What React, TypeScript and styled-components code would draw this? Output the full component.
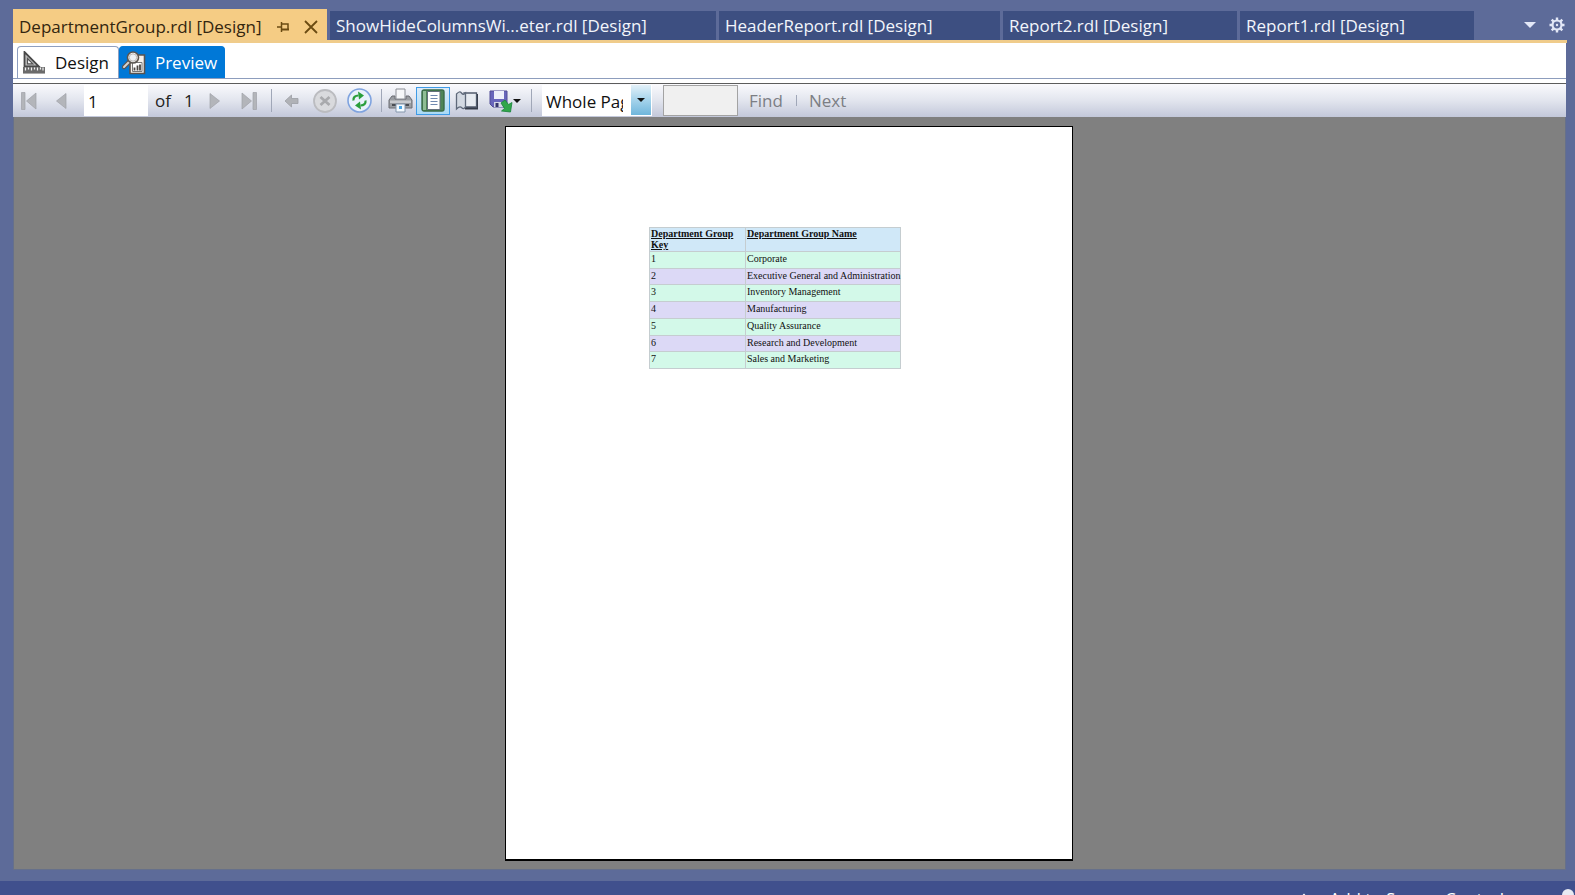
import React from "react";
import styled, { createGlobalStyle, css } from "styled-components";

const GlobalStyle = createGlobalStyle`
  * { box-sizing: border-box; }
  body { margin: 0; background: #5d6b99; }
  body, button, input, select { font-family: "Open Sans", "Noto Sans", sans-serif; font-size: 17px; line-height: 24px; }
  svg { display: block; flex: none; }
`;

const Shell = styled.div`
  display: flex;
  flex-direction: column;
  height: 100vh;
  overflow: hidden;
`;

const TabStrip = styled.div`
  display: flex;
  align-items: flex-end;
  gap: 3px;
  height: 43px;
  margin: 0 8px 0 13px;
  border-bottom: 3px solid #f0cc8b;
`;

const ActiveTab = styled.div`
  display: flex;
  align-items: center;
  gap: 4px;
  width: 314px;
  height: 31px;
  padding: 5px 4px 0 6px;
  background: #f5cc84;
  color: #33260f;
`;

const TabTitle = styled.span`
  flex: 1;
  white-space: nowrap;
`;

const GlyphButton = styled.button`
  display: flex;
  align-items: center;
  justify-content: center;
  padding: 0;
  border: 0;
  width: 24px;
  height: 24px;
  background: none;
`;

const FileTab = styled.button<{ $width: number }>`
  width: ${(p) => p.$width}px;
  height: 29px;
  padding: 1px 6px 0;
  border: 0;
  background: #3d4f81;
  color: #f2f5fb;
  text-align: left;
  white-space: nowrap;
`;

const StripActions = styled.div`
  display: flex;
  align-items: center;
  gap: 3px;
  height: 30px;
  margin: 0 -2px 0 auto;
`;

const Workspace = styled.main`
  display: flex;
  flex-direction: column;
  flex: 1;
  min-height: 0;
  margin: 0 9px 11px 13px;
  background: #fff;
`;

const ModeBar = styled.div`
  display: flex;
  align-items: flex-end;
  height: 36px;
  padding-left: 4px;
  border-bottom: 1px solid #8d9dbd;
`;

const ModeTab = styled.button<{ $selected?: boolean }>`
  display: flex;
  align-items: center;
  height: 32px;
  padding: 0 9px 0 4px;
  gap: 9px;
  border: 1px solid #8e9fc0;
  border-bottom: 0;
  border-radius: 4px 4px 0 0;
  background: #fff;
  color: #111;
  ${(p) =>
    p.$selected &&
    css`
      padding: 0 7px 0 2px;
      border-color: #0078d7;
      background: #0078d7;
      color: #fff;
    `}
`;

const Toolbar = styled.div`
  display: flex;
  align-items: center;
  height: 34px;
  margin-top: 4px;
  padding-left: 1px;
  border-top: 1px solid #5c5c5c;
  background: linear-gradient(#fafafd, #e2e5ee 50%, #c3c8da);
`;

const ToolButton = styled.button<{ $width?: number; $pressed?: boolean }>`
  display: flex;
  align-items: center;
  justify-content: center;
  width: ${(p) => p.$width ?? 34}px;
  height: 28px;
  padding: 0;
  border: 1px solid ${(p) => (p.$pressed ? "#3f9be6" : "transparent")};
  background: ${(p) => (p.$pressed ? "linear-gradient(#dcebf8, #a9daf6)" : "none")};
`;

const Separator = styled.span<{ $short?: boolean }>`
  width: 1px;
  height: ${(p) => (p.$short ? 11 : 23)}px;
  margin: ${(p) => (p.$short ? "0 12px 0 13px" : "0 2px 0 5px")};
  background: #a0a7b8;
`;

const PageInput = styled.input`
  width: 64px;
  height: 31px;
  margin-left: 6px;
  padding: 1px 4px 0;
  border: 0;
  background: #fff;
  color: #111;
`;

const PageCount = styled.span`
  display: flex;
  gap: 13px;
  width: 50px;
  padding-left: 7px;
  color: #222;
`;

const ZoomBox = styled.div`
  position: relative;
  width: 110px;
  height: 31px;
  margin: 0 11px 0 8px;
`;

const ZoomSelect = styled.select`
  appearance: none;
  width: 100%;
  height: 100%;
  padding: 2px 29px 0 4px;
  border: 0;
  border-radius: 0;
  background: #fff;
  color: #111;
`;

const ZoomArrow = styled.span`
  position: absolute;
  top: 0;
  right: 1px;
  bottom: 1px;
  display: flex;
  align-items: center;
  justify-content: center;
  width: 20px;
  background: linear-gradient(#e3f1f9, #a5d3eb 50%, #6fb6dc);
  pointer-events: none;
`;

const FindInput = styled.input`
  width: 75px;
  height: 31px;
  border: 1px solid #a3a3a3;
  background: #f0f0f0;
`;

const FindActions = styled.div`
  display: flex;
  align-items: center;
  margin-left: 11px;
`;

const TextButton = styled.button`
  padding: 0;
  border: 0;
  background: none;
  color: #7c7e84;
`;

const Canvas = styled.section`
  display: flex;
  justify-content: center;
  flex: 1;
  min-height: 0;
  padding: 9px 1px 8px 0;
  border: 1px solid #66708a;
  border-top: 0;
  background: #808080;
`;

const Paper = styled.article`
  width: 568px;
  padding: 100px 0 0 143px;
  border: 1px solid #000;
  border-bottom-width: 2px;
  background: #fff;
`;

const ReportTable = styled.table`
  width: 252px;
  height: 142px;
  border-collapse: collapse;
  table-layout: fixed;
  color: #111;
  font: 10px/11px "Liberation Serif", serif;

  th, td {
    padding: 0 1px;
    border: 1px solid #c5cdd0;
    text-align: left;
    vertical-align: top;
    white-space: nowrap;
  }
  th {
    height: 24px;
    background: #d0e8f8;
    text-decoration: underline;
    white-space: normal;
  }
  th:first-child { width: 96px; }
  td { padding-top: 1px; }
  tbody tr { background: #d3f9e9; }
  tbody tr:nth-child(even) { background: #dcd9f6; }
`;

const StatusBar = styled.footer`
  display: flex;
  align-items: flex-start;
  justify-content: flex-end;
  gap: 58px;
  height: 14px;
  padding-top: 6px;
  overflow: hidden;
  background: #40508d;
  color: #fff;
`;

const SourceControl = styled.button`
  display: flex;
  align-items: center;
  gap: 20px;
  padding: 0;
  border: 0;
  background: none;
  color: inherit;
  white-space: nowrap;
`;

const PinIcon = () => (
  <svg width="13" height="12" viewBox="0 0 13 12" fill="none" stroke="#6b4b12" strokeWidth="1.5">
    <path d="M0 6h4.500M4.500 1v10M4.500 3h6.500v6" />
    <path d="M4.500 8.500h7.500" strokeWidth="2" />
  </svg>
);

const CloseIcon = () => (
  <svg width="14" height="14" viewBox="0 0 14 14" stroke="#6b4b12" strokeWidth="1.8">
    <path d="M1 1l12 12M13 1L1 13" />
  </svg>
);

const GearIcon = () => (
  <svg width="16" height="16" viewBox="0 0 16 16" fill="none" stroke="#e3e8f7">
    <circle cx="8" cy="8" r="4.5" strokeWidth="2.2" />
    <circle cx="8" cy="8" r="1.2" fill="#e3e8f7" stroke="none" />
    <path d="M8 .5v3M8 12.500v3M.5 8h3M12.500 8h3M2.700 2.700l2 2M11.300 11.300l2 2M13.300 2.700l-2 2M4.700 11.300l-2 2" strokeWidth="2.400" />
  </svg>
);

const CaretIcon = ({ color = "#111", width = 8 }: { color?: string; width?: number }) => (
  <svg width={width} height={width / 2} viewBox="0 0 8 4" fill={color}>
    <path d="M0 0h8L4 4z" />
  </svg>
);

const DesignIcon = () => (
  <svg width="24" height="24" viewBox="0 0 24 24">
    <path d="M2.500 1v14.500h14.500z" fill="#bdbdbd" stroke="#484848" strokeWidth="1.800" />
    <path d="M5.500 7.500v5.300h5.300z" fill="#fff" stroke="#555" strokeWidth="1.200" />
    <path d="M1 16h22v7H1z" fill="#6b6b6b" />
    <path d="M3.500 16.500v3M6.500 16.500v2M9.500 16.500v3M12.500 16.500v2M15.500 16.500v3M18.500 16.500v2M21 16.500v3" stroke="#f1f1f1" strokeWidth="1.200" />
    <path d="M1 22.500h22" stroke="#aaa" />
  </svg>
);

const PreviewIcon = () => (
  <svg width="24" height="24" viewBox="0 0 24 24">
    <path d="M8 4h14.500v18.500H8z" fill="#f5f1ec" stroke="#59534f" strokeWidth="1.600" />
    <path d="M10.500 11.500h9.500v9h-9.500z" fill="#fff" stroke="#777" />
    <path d="M12.500 19.500v-3M15.500 19.500v-5M18 19.500v-6" stroke="#4b4541" strokeWidth="1.800" />
    <path d="M7 11l-5 5" stroke="#5b5550" strokeWidth="4.500" strokeLinecap="round" />
    <path d="M7 11l-5 5" stroke="#d8d4d0" strokeWidth="2" strokeLinecap="round" />
    <circle cx="11" cy="6.500" r="5.500" fill="#fff" stroke="#5b5550" strokeWidth="1.600" />
    <circle cx="11" cy="6.500" r="3.700" fill="#edf1f4" stroke="#b9b5b1" />
  </svg>
);

const NavIcon = ({ end, forward }: { end?: boolean; forward?: boolean }) => (
  <svg width="16" height="20" viewBox="0 0 16 20" fill="#b3b5ba" stroke="#9fa1a7" strokeWidth=".7">
    <g transform={forward ? "translate(16 0) scale(-1 1)" : undefined}>
      {end && <path d="M.5 1.500H4v17H.5z" />}
      <path d={end ? "M15 2v16L5.500 10z" : "M13 2.500v15L3.500 10z"} />
    </g>
  </svg>
);

const BackIcon = () => (
  <svg width="15" height="14" viewBox="0 0 15 14" fill="#b0b2b7" stroke="#9c9ea4" strokeWidth=".8">
    <path d="M1 7l6.500-6v3.500H14v5H7.500V13z" />
  </svg>
);

const StopIcon = () => (
  <svg width="24" height="24" viewBox="0 0 24 24" fill="none">
    <circle cx="12" cy="12" r="11" fill="#d9dadd" stroke="#bbbcc0" strokeWidth="1.800" />
    <path d="M7.500 8l9 8M16.500 8l-9 8" stroke="#a9aaad" strokeWidth="2.800" />
  </svg>
);

const RefreshIcon = () => (
  <svg width="25" height="25" viewBox="0 0 25 25">
    <circle cx="12.500" cy="12.500" r="11.500" fill="#e9f1fb" stroke="#7fa3df" strokeWidth="1.600" />
    <g fill="none" stroke="#2a9e3c" strokeWidth="2.200">
      <path d="M6.500 12.500C6 9.500 8 7.500 11.500 7.500" />
      <path d="M18.500 12.500c.5 3-1.500 5-5 5" />
    </g>
    <g fill="#2a9e3c">
      <path d="M11 3.500l6 4-5 4z" />
      <path d="M14 21.500l-6-4 5-4z" />
    </g>
  </svg>
);

const PrinterIcon = () => (
  <svg width="25" height="25" viewBox="0 0 25 25">
    <path d="M4 8h3v3h11V8h3l3 4v8H1v-8z" fill="#9a9da2" stroke="#6a6d73" />
    <path d="M8 1h9v10H8z" fill="#f6f7f9" stroke="#8b8e95" />
    <path d="M2 12.500h21v2.500H2z" fill="#c9cbcf" />
    <path d="M4 17h17" stroke="#4a4d53" strokeWidth="2" />
    <path d="M8 16h9v8H8z" fill="#f4faff" stroke="#8496ac" />
    <path d="M11 18h3v3h-3z" fill="#4aa5e4" />
  </svg>
);

const LayoutIcon = () => (
  <svg width="24" height="23" viewBox="0 0 24 23">
    <rect x="1" y="1" width="22" height="21" rx="2" fill="#4d8457" stroke="#3b6b48" strokeWidth="1.400" />
    <path d="M3.500 2v19" stroke="#8fbd95" strokeWidth="3" />
    <path d="M6.500 2.500h12.500v18H6.500z" fill="#fff" stroke="#64707c" />
    <path d="M9.500 6.500h7M9.500 9.500h7M9.500 12.500h7M9.500 15.500h7" stroke="#7089b0" />
  </svg>
);

const SetupIcon = () => (
  <svg width="24" height="22" viewBox="0 0 24 22">
    <path d="M10 4h13v15.500H10z" fill="#343b48" />
    <path d="M9 3h12.500v14H10z" fill="#e6eaf0" stroke="#515b6c" strokeWidth="1.300" />
    <path d="M1.500 4c2-2 3.500-3 5-1s2.500 1.500 4 0v14c-1.500 2-2.500 2-4 .5s-3-.5-5 1.500z" fill="#d3d9e2" stroke="#5f697a" strokeWidth="1.300" />
  </svg>
);

const SaveIcon = () => (
  <svg width="24" height="24" viewBox="0 0 24 24">
    <path d="M1 2h17v16H4l-3-3z" fill="#6866bb" stroke="#504c96" />
    <path d="M5 2h10v8H5z" fill="#edf0fa" />
    <path d="M5 13h9v5H5z" fill="#d4d7e6" />
    <path d="M6.500 14h3v4h-3z" fill="#35356d" />
    <path d="M12 14l4-3 3.500 4.500 3.500-2-1.500 9.500-9-1 3-2.500z" fill="#31a64a" stroke="#17833a" strokeWidth=".8" />
  </svg>
);

const PublishIcon = () => (
  <svg width="10" height="12" viewBox="0 0 10 12" fill="none" stroke="#fff" strokeWidth="2">
    <path d="M5 12V2M1 6l4-4 4 4" />
  </svg>
);

const NoticeIcon = () => (
  <svg width="13" height="13" viewBox="0 0 13 13" fill="#e8eaf2">
    <circle cx="6" cy="6" r="6" />
  </svg>
);

const NoticeButton = styled.button`
  margin-top: 2px;
  padding: 0;
  border: 0;
  background: none;
`;

const FILE_TABS = [
  { title: "ShowHideColumnsWi...eter.rdl [Design]", width: 386 },
  { title: "HeaderReport.rdl [Design]", width: 281 },
  { title: "Report2.rdl [Design]", width: 234 },
  { title: "Report1.rdl [Design]", width: 234 },
];

const GROUPS = [
  "Corporate",
  "Executive General and Administration",
  "Inventory Management",
  "Manufacturing",
  "Quality Assurance",
  "Research and Development",
  "Sales and Marketing",
];

export default function App() {
  return (
    <Shell>
      <GlobalStyle />
      <TabStrip>
        <ActiveTab>
          <TabTitle>DepartmentGroup.rdl [Design]</TabTitle>
          <GlyphButton aria-label="Pin tab"><PinIcon /></GlyphButton>
          <GlyphButton aria-label="Close tab"><CloseIcon /></GlyphButton>
        </ActiveTab>
        {FILE_TABS.map((tab) => (
          <FileTab key={tab.title} $width={tab.width}>{tab.title}</FileTab>
        ))}
        <StripActions>
          <GlyphButton aria-label="Open documents"><CaretIcon color="#e3e8f7" width={12} /></GlyphButton>
          <GlyphButton aria-label="Tab settings"><GearIcon /></GlyphButton>
        </StripActions>
      </TabStrip>

      <Workspace>
        <ModeBar>
          <ModeTab><DesignIcon />Design</ModeTab>
          <ModeTab $selected><PreviewIcon />Preview</ModeTab>
        </ModeBar>
        <Toolbar>
          <ToolButton $width={30} aria-label="First page"><NavIcon end /></ToolButton>
          <ToolButton aria-label="Previous page"><NavIcon /></ToolButton>
          <PageInput aria-label="Current page" defaultValue="1" />
          <PageCount><span>of</span><span>1</span></PageCount>
          <ToolButton aria-label="Next page"><NavIcon forward /></ToolButton>
          <ToolButton aria-label="Last page"><NavIcon end forward /></ToolButton>
          <Separator />
          <ToolButton aria-label="Back"><BackIcon /></ToolButton>
          <ToolButton aria-label="Stop"><StopIcon /></ToolButton>
          <ToolButton aria-label="Refresh"><RefreshIcon /></ToolButton>
          <Separator />
          <ToolButton $width={32} aria-label="Print"><PrinterIcon /></ToolButton>
          <ToolButton $pressed aria-label="Print layout"><LayoutIcon /></ToolButton>
          <ToolButton aria-label="Page setup"><SetupIcon /></ToolButton>
          <ToolButton $width={42} aria-label="Export"><SaveIcon /><CaretIcon /></ToolButton>
          <Separator />
          <ZoomBox>
            <ZoomSelect aria-label="Zoom"><option>Whole Page</option></ZoomSelect>
            <ZoomArrow><CaretIcon /></ZoomArrow>
          </ZoomBox>
          <FindInput aria-label="Search text" />
          <FindActions>
            <TextButton>Find</TextButton>
            <Separator $short />
            <TextButton>Next</TextButton>
          </FindActions>
        </Toolbar>
        <Canvas>
          <Paper>
            <ReportTable>
              <thead>
                <tr><th>Department Group Key</th><th>Department Group Name</th></tr>
              </thead>
              <tbody>
                {GROUPS.map((name, i) => (
                  <tr key={name}><td>{i + 1}</td><td>{name}</td></tr>
                ))}
              </tbody>
            </ReportTable>
          </Paper>
        </Canvas>
      </Workspace>

      <StatusBar>
        <SourceControl><PublishIcon /><span>Add to Source Control</span></SourceControl>
        <NoticeButton aria-label="Notifications"><NoticeIcon /></NoticeButton>
      </StatusBar>
    </Shell>
  );
}
